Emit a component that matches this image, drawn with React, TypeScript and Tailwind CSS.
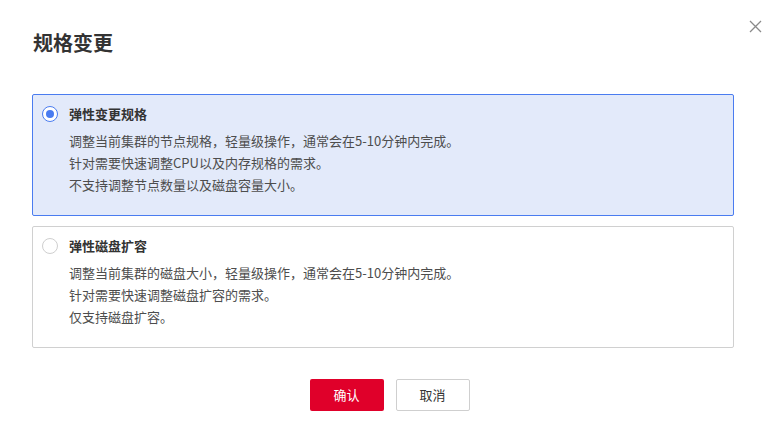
import React from "react";

const font = { fontFamily: '"Noto Sans CJK SC", "Noto Sans", sans-serif' };

function Radio({ checked }: { checked: boolean }) {
  return checked ? (
    <span className="flex h-[16px] w-[16px] shrink-0 items-center justify-center rounded-full border border-[#4a7cf0] bg-white">
      <span className="h-[8px] w-[8px] rounded-full bg-[#4a7cf0]" />
    </span>
  ) : (
    <span className="h-[16px] w-[16px] shrink-0 rounded-full border border-[#cfcfcf] bg-white" />
  );
}

function Option({
  checked,
  title,
  lines,
}: {
  checked: boolean;
  title: string;
  lines: string[];
}) {
  return (
    <div
      className={
        checked
          ? "rounded-[2px] border border-[#4a7cf0] bg-[#e3eafa] pl-[9px] pr-4 pt-[8px] pb-[19px]"
          : "rounded-[2px] border border-[#d0d0d0] bg-white pl-[9px] pr-4 pt-[8px] pb-[19px]"
      }
    >
      <div className="flex h-[22px] items-center gap-[11px]">
        <Radio checked={checked} />
        <span className="text-[13px] font-bold text-[#333]">{title}</span>
      </div>
      <div className="mt-[5px] pl-[27px] text-[13px] leading-[22px] text-[#4d4d4d]">
        {lines.map((l) => (
          <div key={l}>{l}</div>
        ))}
      </div>
    </div>
  );
}

export default function App() {
  return (
    <div className="relative h-[445px] w-[779px] bg-white" style={font}>
      <button className="absolute left-[748px] top-[19px] flex h-[14px] w-[14px] items-center justify-center text-[#8a8a8a]">
        <svg width="13" height="13" viewBox="0 0 13 13" fill="none">
          <path d="M1 1L12 12M12 1L1 12" stroke="#8a8a8a" strokeWidth="1.3" />
        </svg>
      </button>
      <div className="px-[32px] pt-[31px]">
        <div className="h-[24px] pl-[1px] text-[20px] font-bold leading-[24px] text-[#333]">
          规格变更
        </div>
        <div className="mt-[39px] flex w-[702px] flex-col gap-[10px]">
          <Option
            checked
            title="弹性变更规格"
            lines={[
              "调整当前集群的节点规格，轻量级操作，通常会在5-10分钟内完成。",
              "针对需要快速调整CPU以及内存规格的需求。",
              "不支持调整节点数量以及磁盘容量大小。",
            ]}
          />
          <Option
            checked={false}
            title="弹性磁盘扩容"
            lines={[
              "调整当前集群的磁盘大小，轻量级操作，通常会在5-10分钟内完成。",
              "针对需要快速调整磁盘扩容的需求。",
              "仅支持磁盘扩容。",
            ]}
          />
        </div>
        <div className="mt-[31px] flex justify-center gap-[12px]">
          <button className="h-[32px] w-[74px] rounded-[2px] bg-[#e0002a] text-[13px] text-white">
            确认
          </button>
          <button className="h-[32px] w-[74px] rounded-[2px] border border-[#cfcfcf] bg-white text-[13px] text-[#333]">
            取消
          </button>
        </div>
      </div>
    </div>
  );
}
